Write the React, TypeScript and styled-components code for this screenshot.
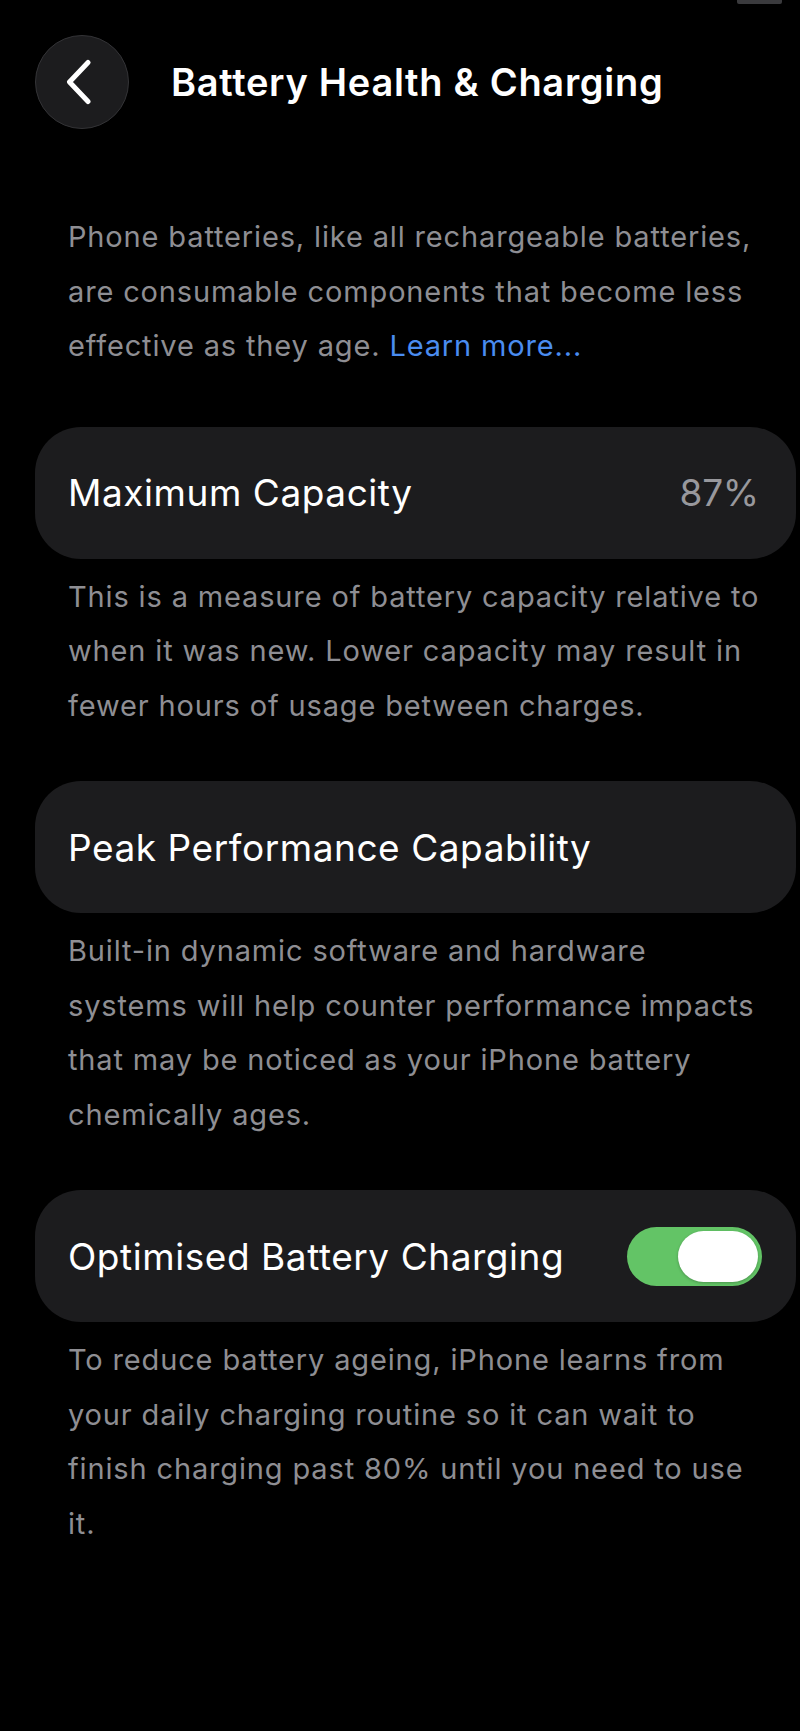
import styled, { createGlobalStyle } from "styled-components";

const GlobalStyle = createGlobalStyle`
  html, body {
    margin: 0;
    padding: 0;
    background: #000000;
  }
  body {
    font-family: "Inter", "Liberation Sans", sans-serif;
    -webkit-font-smoothing: antialiased;
  }
`;

const ChevronLeft = () => (
  <svg width="28" height="46" viewBox="0 0 28 46" fill="none">
    <path
      d="M23 3.5L4.5 23L23 42.5"
      stroke="currentColor"
      strokeWidth="5"
      strokeLinecap="round"
      strokeLinejoin="round"
    />
  </svg>
);

const App = () => {
  return (
    <>
      <GlobalStyle />
      <Page>
        <StatusSliver />
        <Header>
          <BackButton aria-label="Back">
            <ChevronLeft />
          </BackButton>
          <Title>Battery Health &amp; Charging</Title>
        </Header>

        <Intro>
          Phone batteries, like all rechargeable batteries,
          <br />
          are consumable components that become less
          <br />
          effective as they age. <LearnMore href="#">Learn more...</LearnMore>
        </Intro>

        <Sections>
          <Section>
            <Card>
              <Label>Maximum Capacity</Label>
              <Value>87%</Value>
            </Card>
            <Footer>
              This is a measure of battery capacity relative to
              <br />
              when it was new. Lower capacity may result in
              <br />
              fewer hours of usage between charges.
            </Footer>
          </Section>

          <Section>
            <Card>
              <Label>Peak Performance Capability</Label>
            </Card>
            <Footer>
              Built-in dynamic software and hardware
              <br />
              systems will help counter performance impacts
              <br />
              that may be noticed as your iPhone battery
              <br />
              chemically ages.
            </Footer>
          </Section>

          <Section>
            <Card>
              <Label>Optimised Battery Charging</Label>
              <Toggle $on>
                <Knob $on />
              </Toggle>
            </Card>
            <Footer>
              To reduce battery ageing, iPhone learns from
              <br />
              your daily charging routine so it can wait to
              <br />
              finish charging past 80% until you need to use
              <br />
              it.
            </Footer>
          </Section>
        </Sections>
      </Page>
    </>
  );
};

const Page = styled.div`
  position: relative;
  width: 800px;
  min-height: 1731px;
  background: #000000;
  box-sizing: border-box;
  padding: 35px 4px 0 35px;
  display: flex;
  flex-direction: column;
`;

const StatusSliver = styled.div`
  position: absolute;
  top: 0;
  right: 18px;
  width: 45px;
  height: 4px;
  border-radius: 0 0 2px 2px;
  background: #3a3a3d;
`;

const Header = styled.header`
  display: flex;
  align-items: center;
  gap: 42px;
`;

const BackButton = styled.button`
  all: unset;
  cursor: pointer;
  width: 92px;
  height: 92px;
  border-radius: 50%;
  background: #1c1c1e;
  border: 1px solid #333336;
  color: #ffffff;
  display: flex;
  align-items: center;
  justify-content: center;
  flex-shrink: 0;

  svg {
    margin-left: -6px;
  }
`;

const Title = styled.h1`
  margin: 0;
  font-size: 38px;
  font-weight: 600;
  color: #ffffff;
  letter-spacing: 0.7px;
  white-space: nowrap;
`;

const Intro = styled.p`
  margin: 81px 0 0;
  padding: 0 33px;
  font-size: 29px;
  line-height: 54.5px;
  color: #8e8e93;
  letter-spacing: 0.85px;
  white-space: nowrap;
`;

const LearnMore = styled.a`
  color: #4a8cf0;
  text-decoration: none;
`;

const Sections = styled.div`
  margin-top: 53px;
  display: flex;
  flex-direction: column;
  gap: 48px;
`;

const Section = styled.section`
  display: flex;
  flex-direction: column;
  gap: 11px;
`;

const Card = styled.div`
  height: 132px;
  border-radius: 46px;
  background: #1c1c1e;
  padding: 0 34px 0 33px;
  box-sizing: border-box;
  display: flex;
  align-items: center;
  justify-content: space-between;
`;

const Label = styled.span`
  font-size: 37px;
  font-weight: 400;
  color: #ffffff;
  letter-spacing: 0.55px;
  white-space: nowrap;
`;

const Value = styled.span`
  font-size: 37px;
  font-weight: 400;
  color: #98989d;
  letter-spacing: -0.2px;
  margin-right: 3px;
`;

const Footer = styled.p`
  margin: 0;
  padding: 0 33px;
  font-size: 29px;
  line-height: 54.5px;
  color: #8e8e93;
  letter-spacing: 0.85px;
  white-space: nowrap;
`;

const Toggle = styled.div<{ $on?: boolean }>`
  position: relative;
  width: 135px;
  height: 59px;
  border-radius: 30px;
  background: ${({ $on }) => ($on ? "#63c466" : "#39393d")};
  flex-shrink: 0;
`;

const Knob = styled.div<{ $on?: boolean }>`
  position: absolute;
  top: 4px;
  ${({ $on }) => ($on ? "right: 4px;" : "left: 4px;")}
  width: 80px;
  height: 51px;
  border-radius: 26px;
  background: #ffffff;
  box-shadow: 0 1px 3px rgba(0, 0, 0, 0.25);
`;

export default App;
